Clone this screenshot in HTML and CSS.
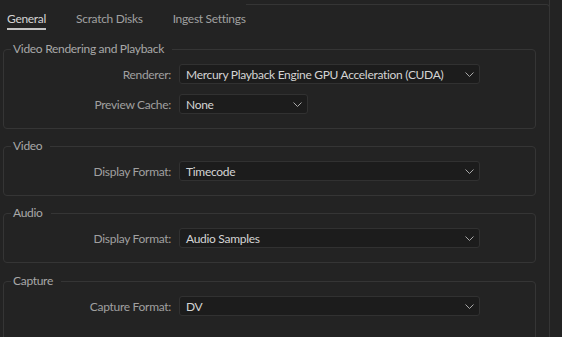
FILE: index.html
```html
<!DOCTYPE html>
<html lang="en">
<head>
  <meta charset="UTF-8" />
  <title>Preferences</title>
  <link rel="stylesheet" href="styles.css">
</head>
<body>

  <div class="window">
    <!-- Tabs -->
    <div class="tabs">
      <span class="tab active">General</span>
      <span class="tab">Scratch Disks</span>
      <span class="tab">Ingest Settings</span>
      <span class="tabs-rest"></span>
    </div>

    <fieldset class="group">
      <legend>Video Rendering and Playback</legend>
      <div class="row">
        <label>Renderer:</label>
        <div class="dropdown wide">
          <span>Mercury Playback Engine GPU Acceleration (CUDA)</span>
          <svg width="9" height="5" viewBox="0 0 9 5"><path d="M0.5 0.5 L4.5 4.5 L8.5 0.5" /></svg>
        </div>
      </div>
      <div class="row">
        <label>Preview Cache:</label>
        <div class="dropdown short">
          <span>None</span>
          <svg width="9" height="5" viewBox="0 0 9 5"><path d="M0.5 0.5 L4.5 4.5 L8.5 0.5" /></svg>
        </div>
      </div>
    </fieldset>

    <fieldset class="group">
      <legend>Video</legend>
      <div class="row">
        <label>Display Format:</label>
        <div class="dropdown wide">
          <span>Timecode</span>
          <svg width="9" height="5" viewBox="0 0 9 5"><path d="M0.5 0.5 L4.5 4.5 L8.5 0.5" /></svg>
        </div>
      </div>
    </fieldset>

    <fieldset class="group">
      <legend>Audio</legend>
      <div class="row">
        <label>Display Format:</label>
        <div class="dropdown wide">
          <span>Audio Samples</span>
          <svg width="9" height="5" viewBox="0 0 9 5"><path d="M0.5 0.5 L4.5 4.5 L8.5 0.5" /></svg>
        </div>
      </div>
    </fieldset>

    <fieldset class="group last">
      <legend>Capture</legend>
      <div class="row">
        <label>Capture Format:</label>
        <div class="dropdown wide">
          <span>DV</span>
          <svg width="9" height="5" viewBox="0 0 9 5"><path d="M0.5 0.5 L4.5 4.5 L8.5 0.5" /></svg>
        </div>
      </div>
    </fieldset>
  </div>

</body>
</html>
```

FILE: styles.css
```css
:root {
  --bg: #232323;
  --line: #353535;
  --field: #1c1c1c;
  --label: #a0a0a0;
  --text: #d4d4d4;
}

* {
  box-sizing: border-box;
}

body {
  margin: 0;
  background: var(--bg);
  font-family: Lato, "Liberation Sans", sans-serif;
  font-size: 12px;
  letter-spacing: -0.3px;
  color: var(--text);
  overflow: hidden;
}

.window {
  width: 550px;
  min-height: 100vh;
  border-right: 1px solid var(--line);
}

.tabs {
  display: flex;
  align-items: flex-start;
  gap: 30px;
  padding-left: 7px;
}

.tab {
  padding: 11px 0 1px;
  line-height: 16px;
  color: var(--label);
  border-bottom: 2px solid transparent;
}

.tab.active {
  color: var(--text);
  border-bottom-color: #c4c4c4;
}

.tabs-rest {
  flex: 1;
  margin: 4px -1px 0 -30px;
  height: 10px;
  border-top: 1px solid var(--line);
  border-right: 1px solid var(--line);
  border-top-right-radius: 4px;
}

.group {
  margin: 9px 13px 0 3px;
  padding: 7px 14px 14px 7px;
  border: 1px solid var(--line);
  border-radius: 4px;
  display: flex;
  flex-direction: column;
  gap: 10px;
}

.group:first-of-type {
  margin-top: 11px;
}

.group.last {
  margin-top: 10px;
  padding-bottom: 40px;
}

.group legend {
  padding: 0 8px 0 2px;
  line-height: 16px;
  color: #a8a8a8;
}

.row {
  display: grid;
  grid-template-columns: 160px auto;
  column-gap: 8px;
  align-items: center;
}

.row label {
  text-align: right;
  color: var(--label);
}

.dropdown {
  height: 20px;
  display: flex;
  align-items: center;
  justify-content: space-between;
  padding: 0 5px 0 6px;
  background: var(--field);
  border: 1px solid #313131;
  border-radius: 3px;
  color: var(--text);
}

.dropdown.wide {
  width: 301px;
}

.dropdown.short {
  width: 129px;
}

.dropdown svg path {
  fill: none;
  stroke: #a8a8a8;
  stroke-width: 1;
}
```
